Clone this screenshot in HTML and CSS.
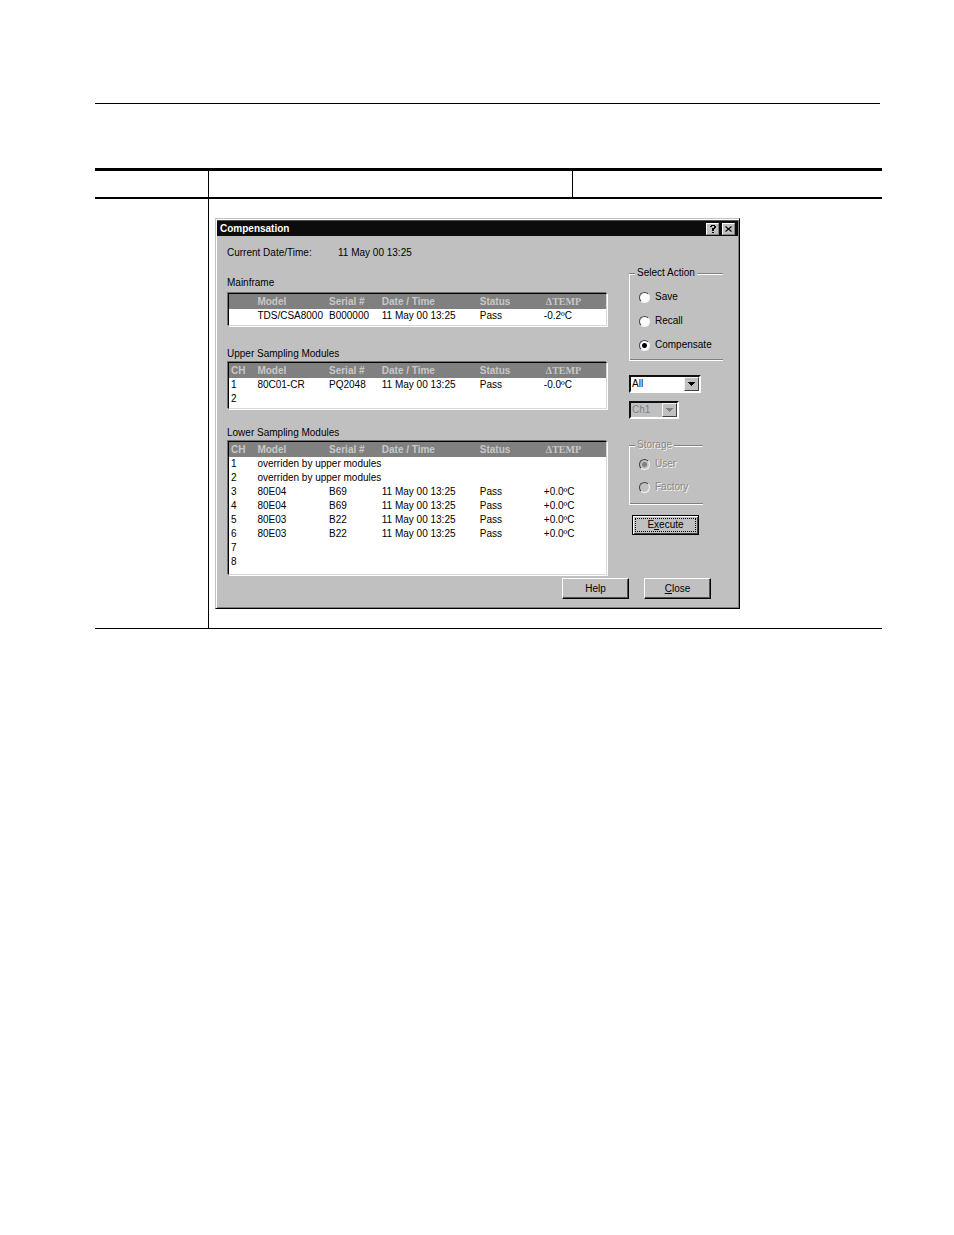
FILE: index.html
```html
<!DOCTYPE html>
<html lang="en">
<head>
<meta charset="utf-8">
<meta name="viewport" content="width=device-width, initial-scale=1">
<title>Compensation</title>
<link rel="stylesheet" href="styles.css">
</head>
<body>
<main class="sheet">
  <hr class="sheet-rule">
  <div class="frame">
    <div class="frame-head"><span></span><span></span><span></span></div>
    <div class="frame-body">
      <div class="frame-side"></div>
      <div class="frame-content">
        <section class="dialog" role="dialog" aria-labelledby="dialog-title">
          <header class="titlebar">
            <h1 class="title" id="dialog-title">Compensation</h1>
            <button class="title-button" type="button" aria-label="What's this">
              <svg viewBox="0 0 11 10" shape-rendering="crispEdges"><path d="M4 1h4v1h1v2h-1v1h-1v2h-2v-3h2v-2h-2v1h-2v-1h1zM5 8h2v1h-2z"/></svg>
            </button>
            <button class="title-button" type="button" aria-label="Close window">
              <svg viewBox="0 0 11 10"><path d="M2.5 2.5l6 5M8.5 2.5l-6 5" fill="none" stroke="#000" stroke-width="1.1"/></svg>
            </button>
          </header>
          <form class="dialog-body">
            <div class="modules">
              <p class="now"><span class="now-label">Current Date/Time:</span><time>11 May 00 13:25</time></p>

              <h2 class="list-label list-label-main" id="main-label">Mainframe</h2>
              <div class="list list-main">
                <table aria-labelledby="main-label">
                  <colgroup><col class="c-ch"><col class="c-model"><col class="c-serial"><col class="c-date"><col class="c-status"><col></colgroup>
                  <thead><tr><th></th><th>Model</th><th>Serial #</th><th>Date / Time</th><th>Status</th><th class="temp">ΔTEMP</th></tr></thead>
                  <tbody><tr><td></td><td>TDS/CSA8000</td><td>B000000</td><td>11 May 00 13:25</td><td>Pass</td><td>-0.2ºC</td></tr></tbody>
                </table>
              </div>

              <h2 class="list-label" id="upper-label">Upper Sampling Modules</h2>
              <div class="list">
                <table aria-labelledby="upper-label">
                  <colgroup><col class="c-ch"><col class="c-model"><col class="c-serial"><col class="c-date"><col class="c-status"><col></colgroup>
                  <thead><tr><th>CH</th><th>Model</th><th>Serial #</th><th>Date / Time</th><th>Status</th><th class="temp">ΔTEMP</th></tr></thead>
                  <tbody>
                    <tr><td>1</td><td>80C01-CR</td><td>PQ2048</td><td>11 May 00 13:25</td><td>Pass</td><td>-0.0ºC</td></tr>
                    <tr><td>2</td><td></td><td></td><td></td><td></td><td></td></tr>
                  </tbody>
                </table>
              </div>

              <h2 class="list-label" id="lower-label">Lower Sampling Modules</h2>
              <div class="list list-tall">
                <table aria-labelledby="lower-label">
                  <colgroup><col class="c-ch"><col class="c-model"><col class="c-serial"><col class="c-date"><col class="c-status"><col></colgroup>
                  <thead><tr><th>CH</th><th>Model</th><th>Serial #</th><th>Date / Time</th><th>Status</th><th class="temp">ΔTEMP</th></tr></thead>
                  <tbody>
                    <tr><td>1</td><td colspan="5">overriden by upper modules</td></tr>
                    <tr><td>2</td><td colspan="5">overriden by upper modules</td></tr>
                    <tr><td>3</td><td>80E04</td><td>B69</td><td>11 May 00 13:25</td><td>Pass</td><td>+0.0ºC</td></tr>
                    <tr><td>4</td><td>80E04</td><td>B69</td><td>11 May 00 13:25</td><td>Pass</td><td>+0.0ºC</td></tr>
                    <tr><td>5</td><td>80E03</td><td>B22</td><td>11 May 00 13:25</td><td>Pass</td><td>+0.0ºC</td></tr>
                    <tr><td>6</td><td>80E03</td><td>B22</td><td>11 May 00 13:25</td><td>Pass</td><td>+0.0ºC</td></tr>
                    <tr><td>7</td><td colspan="5"></td></tr>
                    <tr><td>8</td><td colspan="5"></td></tr>
                  </tbody>
                </table>
              </div>
            </div>

            <div class="controls">
              <fieldset class="group group-action">
                <legend>Select Action</legend>
                <label class="option"><input type="radio" name="action">Save</label>
                <label class="option"><input type="radio" name="action">Recall</label>
                <label class="option"><input type="radio" name="action" checked>Compensate</label>
              </fieldset>
              <div class="combo combo-target">
                <select aria-label="Target"><option>All</option></select>
                <span class="combo-arrow"><svg viewBox="0 0 7 4" shape-rendering="crispEdges"><path d="M0 0h7v1h-1v1h-1v1h-1v1h-1v-1h-1v-1h-1v-1h-1z"/></svg></span>
              </div>
              <div class="combo combo-channel">
                <select aria-label="Channel" disabled><option>Ch1</option></select>
                <span class="combo-arrow"><svg viewBox="0 0 7 4" shape-rendering="crispEdges"><path d="M0 0h7v1h-1v1h-1v1h-1v1h-1v-1h-1v-1h-1v-1h-1z"/></svg></span>
              </div>
              <fieldset class="group group-storage" disabled>
                <legend>Storage</legend>
                <label class="option"><input type="radio" name="storage" checked>User</label>
                <label class="option"><input type="radio" name="storage">Factory</label>
              </fieldset>
              <button class="button button-default" type="button"><span class="focus">E<u>x</u>ecute</span></button>
            </div>

            <footer class="actions">
              <button class="button" type="button">Help</button>
              <button class="button" type="button"><u>C</u>lose</button>
            </footer>
          </form>
        </section>
      </div>
    </div>
  </div>
</main>
</body>
</html>
```

FILE: styles.css
```css
* { box-sizing: border-box; }

body {
  margin: 0;
  background: #fff;
  color: #000;
  font: 10px/14px "Liberation Sans", Arial, sans-serif;
}

/* Page and its ruled frame */
.sheet { padding: 103px 72px 64px 95px; }
.sheet-rule {
  height: 1px;
  margin: 0 2px 64px 0;
  border: 0;
  background: #000;
}
.frame {
  border-top: 3px solid #000;
  border-bottom: 1px solid #000;
}
.frame-head {
  display: grid;
  grid-template-columns: 113px 364fr 310fr;
  height: 28px;
  border-bottom: 2px solid #000;
}
.frame-head span + span { border-left: 1px solid #000; }
.frame-body {
  display: grid;
  grid-template-columns: 113px 1fr;
}
.frame-content {
  padding: 19px 6px;
  border-left: 1px solid #000;
}

/* Dialog window */
.dialog {
  max-width: 525px;
  border: 1px solid;
  border-color: #c0c0c0 #000 #000 #c0c0c0;
  background: #c0c0c0;
  box-shadow: inset 1px 1px #fff, inset -1px -1px #808080;
}
.titlebar {
  display: flex;
  align-items: center;
  gap: 3px;
  height: 16px;
  margin: 1px;
  padding: 0 3px;
  border-top: 1px solid #505050;
  background: #0c0c0c;
}
.title {
  flex: 1;
  margin: 0;
  color: #fff;
  font-size: 10px;
}
.title-button {
  display: flex;
  width: 13px;
  height: 12px;
  padding: 0;
  border: 1px solid;
  border-color: #fff #808080 #808080 #fff;
  background: #c0c0c0;
}
.title-button svg { width: 11px; height: 10px; }

.dialog-body {
  display: grid;
  grid-template-columns: minmax(0, 381fr) 110px;
  column-gap: 21px;
  padding: 9px 0 9px 11px;
}

/* Module lists */
.now { display: flex; margin: 0 0 16px; }
.now-label { width: 111px; }
.list-label {
  margin: 0;
  font-size: 10px;
  font-weight: normal;
}
.list-label-main { margin-bottom: 3px; }
.list {
  margin: 1px 1px 17px;
  padding-bottom: 2px;
  border: 1px solid;
  border-color: #000 #d8d8d8 #d8d8d8 #000;
  background: #fff;
  box-shadow: -1px -1px #707070, 1px 1px #fff;
}
.list-main { margin-bottom: 21px; }
.list-tall { margin-bottom: 1px; padding-bottom: 5px; }
.list table {
  width: 100%;
  border-collapse: collapse;
  table-layout: fixed;
}
.c-ch { width: 7%; }
.c-model { width: 19%; }
.c-serial { width: 14%; }
.c-date { width: 26%; }
.c-status { width: 17%; }
.list th, .list td {
  height: 14px;
  padding: 0 0 0 2px;
  line-height: 14px;
  text-align: left;
  white-space: nowrap;
}
.list th {
  height: 15px;
  background: #808080;
  color: #c8c8c8;
}
.list th.temp {
  padding-left: 4px;
  font-family: "Liberation Serif", "Times New Roman", serif;
}

/* Right-hand controls */
.controls {
  display: flex;
  flex-direction: column;
  align-items: flex-start;
  padding-top: 20px;
}
.group {
  min-width: 0;
  margin: 0;
  padding: 0 0 0 10px;
  border: 0;
  border-top: 1px solid #808080;
  border-bottom: 1px solid #fff;
  background:
    linear-gradient(#fff, #fff) top / 100% 1px no-repeat padding-box,
    linear-gradient(#fff, #fff) left / 1px 100% no-repeat padding-box,
    linear-gradient(#808080, #808080) bottom / 100% 1px no-repeat padding-box;
}
.group legend {
  margin-left: -4px;
  padding: 0 2px;
  background: #c0c0c0;
}
.group-action {
  width: 94px;
  margin-bottom: 14px;
  padding-bottom: 8px;
}
.group-storage {
  width: 74px;
  margin: 19px 0 10px;
  padding-bottom: 10px;
}
.option {
  display: flex;
  align-items: center;
  gap: 5px;
  margin-top: 10px;
}
.group-storage .option { margin-top: 9px; }
.group-storage legend + .option { margin-top: 5px; }
.option input {
  appearance: none;
  flex: none;
  width: 11px;
  height: 11px;
  margin: 0;
  border: 1px solid;
  border-color: #404040 #f4f4f4 #f4f4f4 #404040;
  border-radius: 50%;
  background: #fff;
}
.option input:checked { background: radial-gradient(circle, #000 2px, #fff 3px); }
.group:disabled { color: #888; text-shadow: 1px 1px #f4f4f4; }
.option input:disabled { background: #c0c0c0; }
.option input:disabled:checked { background: radial-gradient(circle, #808080 2px, #c0c0c0 3px); }

.combo {
  position: relative;
  display: flex;
  height: 18px;
  border: 2px solid;
  border-color: #101010 #fff #fff #101010;
  background: #fff;
}
.combo-target { width: 72px; }
.combo-channel { width: 50px; margin-top: 8px; background: #c0c0c0; }
.combo select {
  appearance: none;
  width: 100%;
  padding: 0 14px 0 1px;
  border: 0;
  background: transparent;
  color: #000;
  font: inherit;
}
.combo select:disabled { color: #808080; opacity: 1; }
.combo-arrow {
  position: absolute;
  top: 0;
  right: 0;
  display: flex;
  align-items: center;
  justify-content: center;
  width: 15px;
  height: 14px;
  border: 1px solid;
  border-color: #f4f4f4 #404040 #404040 #f4f4f4;
  background: #c0c0c0;
  pointer-events: none;
}
.combo-arrow svg { width: 7px; height: 4px; }
.combo-channel .combo-arrow svg { fill: #808080; }

/* Push buttons */
.button {
  width: 67px;
  height: 21px;
  padding: 0;
  border: 1px solid;
  border-color: #fff #000 #000 #fff;
  background: #c0c0c0;
  box-shadow: inset -1px -1px #505050;
  color: #000;
  font: inherit;
}
.button-default {
  height: 20px;
  margin-left: 3px;
  padding: 2px;
  border-color: #000;
  box-shadow: inset 1px 1px #fff, inset -1px -1px #404040;
}
.focus {
  display: block;
  border: 1px dotted #000;
  line-height: 12px;
}
.actions {
  grid-column: 1 / -1;
  display: flex;
  justify-content: flex-end;
  gap: 15px;
  padding: 2px 28px 0 0;
}
```
